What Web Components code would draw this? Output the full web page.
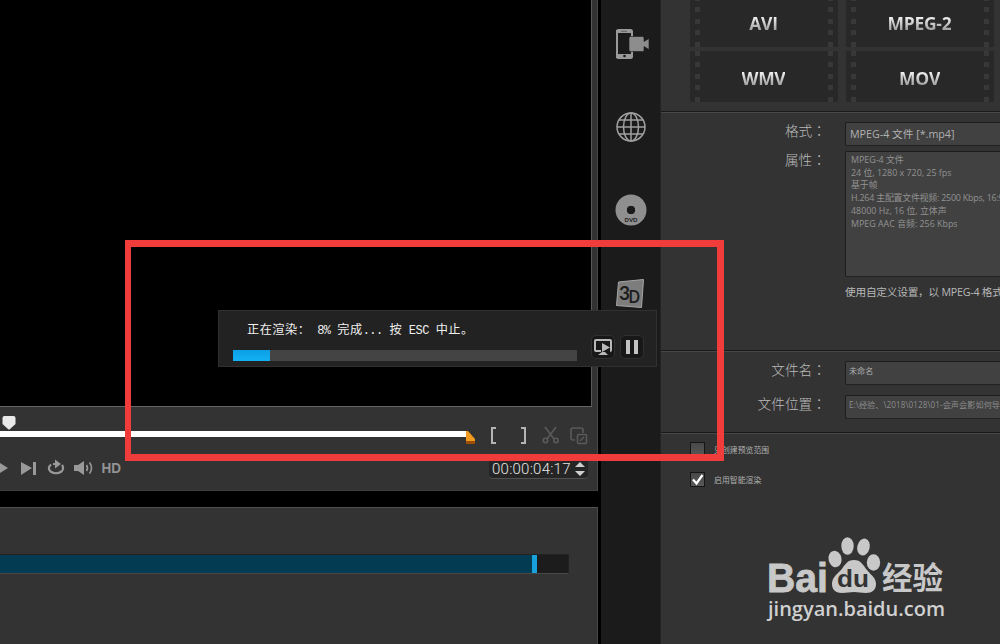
<!DOCTYPE html>
<html>
<head>
<meta charset="utf-8">
<title>Video Studio</title>
<style>
  body {
    margin: 0;
    width: 1000px;
    height: 644px;
    overflow: hidden;
    background: #000;
    color: #a8a8a8;
    font-family: "Open Sans", "Noto Sans CJK SC", sans-serif;
  }
</style>
</head>
<body>
<studio-app></studio-app>

<script>
const define = (name, html) => {
  const template = document.createElement('template');
  template.innerHTML = html;
  customElements.define(name, class extends HTMLElement {
    constructor() {
      super();
      this.attachShadow({mode: 'open'});
      this.shadowRoot.appendChild(template.content.cloneNode(true));
    }
  });
};

define('preview-player', `
  <style>
    :host {
      display: flex;
      flex-direction: column;
      height: 491px;
      box-sizing: border-box;
      background: #333;
      border-right: 1px solid #484848;
      border-bottom: 1px solid #3d3d3d;
    }
    .screen {
      width: 591px;
      height: 406px;
      background: #000;
      border-right: 1px solid #5a5a5a;
      border-bottom: 1px solid #666;
    }
    .seek { height: 44px; }
    .buttons { display: flex; justify-content: space-between; height: 38px; }
    svg { display: block; }
    .time {
      display: flex;
      align-items: center;
      box-sizing: border-box;
      width: 99px;
      height: 20px;
      margin: 8px 9px 0 0;
      padding-left: 3px;
      background: #252525;
      border-bottom: 1px solid #505050;
      border-radius: 4px;
      color: #e4e4e4;
      font: 300 15px/18px Roboto, sans-serif;
      letter-spacing: .25px;
      white-space: nowrap;
    }
    .time span { width: 82px; }
  </style>
  <div class="screen"></div>
  <svg class="seek" width="596" height="44" viewBox="0 407 596 44">
    <path d="M0 431H467V437H0z" fill="#fff"/>
    <path d="M2.500 418q0-2 2-2h9q2 0 2 2v6l-6 5.500h-1l-6-5.500z" fill="#e9e9e9"/>
    <path d="M466 431h2l7 8v4h-9z" fill="#f39a20"/>
    <path d="M466 441h9v3h-9z" fill="#9a4e08"/>
    <g fill="none" stroke="#b4b4b4" stroke-width="2">
      <path d="M496 428h-4v15h4M521 428h4v15h-4"/>
    </g>
    <g fill="none" stroke="#5a5a5a" stroke-width="1.600">
      <path d="M545 427l9 12M556 427l-9 12"/>
      <circle cx="545.500" cy="440.500" r="2.200"/><circle cx="556" cy="440.500" r="2.200"/>
      <path d="M575 440h-2q-2 0-2-2v-8q0-2 2-2h8q2 0 2 2v3"/>
      <rect x="577.500" y="434.500" width="9" height="9" rx="1"/>
      <path d="M580 441l4-4"/>
    </g>
  </svg>
  <div class="buttons">
    <svg width="126" height="38" viewBox="0 451 126 38">
      <g fill="#999">
        <path d="M0 463l8 5-8 5zM21 462l11 6-11 7zM33 462h3v13h-3z"/>
        <path d="M74 465h4l6-4v14l-6-4h-4z"/>
      </g>
      <g fill="none" stroke="#999" stroke-width="2.200">
        <path d="M51 464.500q-4 3.500-.5 7q5.500 3.500 11 0q3-3 .5-6.500M53 464h3"/>
        <path d="M86.500 465q2 3 0 6M89.500 462.500q4 5.500 0 11" stroke-width="1.600"/>
      </g>
      <path d="M55 459.500l6 4.500-6 4.500z" fill="#999"/>
      <text x="101.500" y="473" font-family="Liberation Sans" font-weight="bold" font-size="14" textLength="19.500" lengthAdjust="spacingAndGlyphs" fill="#949494">HD</text>
    </svg>
    <div class="time">
      <span>00:00:04:17</span>
      <svg width="12" height="16"><path d="M1 6l5-5 5 5zM1 10h10l-5 5z" fill="#d0d0d0"/></svg>
    </div>
  </div>`);

define('timeline-strip', `
  <style>
    :host {
      display: block;
      box-sizing: border-box;
      height: 137px;
      padding-top: 46px;
      background: #333;
      border-top: 1px solid #505050;
      border-right: 1px solid #484848;
    }
    .track {
      display: flex;
      width: 568px;
      height: 18px;
      background: #1c1c1c;
      border: solid #222;
      border-width: 1px 1px 1px 0;
      border-bottom-color: #484848;
    }
    .done { width: 532px; background: #023b52; }
    .handle { width: 5px; background: #18a0dc; }
  </style>
  <div class="track"><div class="done"></div><div class="handle"></div></div>`);

define('output-sidebar', `
  <style>
    :host {
      display: grid;
      grid-template-rows: repeat(4, 83px);
      justify-items: center;
      align-items: center;
      align-content: start;
      box-sizing: border-box;
      width: 60px;
      height: 644px;
      padding: 2px 0 0;
      background: #1b1b1b;
      border-right: 1px solid #242424;
    }
    svg { display: block; }
  </style>
  <svg width="38" height="34" viewBox="-1 0 38 34">
    <rect x="4" y="3" width="15" height="28" rx="1.500" fill="none" stroke="#9a9a9a" stroke-width="2"/>
    <path d="M3 3h16v3H3zM3 27h16v4H3z" fill="#9a9a9a"/>
    <path d="M8 4.300h6" stroke="#555" stroke-width=".8"/>
    <circle cx="11.500" cy="29" r="1.300" fill="#1b1b1b"/>
    <path d="M16 11q0-1.500 1.500-1.500h12Q31 9.500 31 11v3.500l5-3v11l-5-3V23q0 1.500-1.500 1.500h-12Q16 24.500 16 23z" fill="#8d8d8d" stroke="#1b1b1b" stroke-width=".6"/>
  </svg>
  <svg width="32" height="32" viewBox="0 0 32 32" fill="none" stroke="#a0a0a0" stroke-width="1.500">
    <circle cx="16" cy="16" r="14"/>
    <ellipse cx="16" cy="16" rx="7.500" ry="14"/>
    <path d="M16 2v28M2 16h28M4 9h24M4 23h24"/>
  </svg>
  <svg width="32" height="32" viewBox="0 0 32 32">
    <circle cx="16" cy="16" r="15.500" fill="#8f8f8f"/>
    <circle cx="16" cy="16" r="4.800" fill="#1b1b1b" stroke="#b0b0b0" stroke-width=".8"/>
    <text x="16" y="28" text-anchor="middle" font-family="Liberation Sans" font-weight="bold" font-size="5.500" textLength="13" lengthAdjust="spacingAndGlyphs" fill="#222">DVD</text>
  </svg>
  <svg width="32" height="32" viewBox="0 0 32 32">
    <path d="M3.500 5l25-2.500-2 28-25-2z" fill="#7d7d7d" stroke="#a5a5a5"/>
    <text x="4" y="23" font-family="Lato" font-weight="bold" font-size="19" fill="#1d1d1d">3</text>
    <text x="13.500" y="26" font-family="Lato" font-weight="bold" font-size="16.500" textLength="11.500" lengthAdjust="spacingAndGlyphs" fill="#1d1d1d">D</text>
  </svg>`);

define('format-tile', `
  <style>
    :host {
      display: flex;
      justify-content: space-between;
      align-items: center;
      box-sizing: border-box;
      height: 51px;
      padding: 0 5px;
      background: #282828;
    }
    .holes {
      width: 5px;
      height: 51px;
      background: repeating-linear-gradient(#383838 0 5px, #282828 5px 11.400px);
    }
    .name {
      margin: 2px 1px 0 0;
      font: 700 17.500px/24px "Open Sans", sans-serif;
      letter-spacing: -.3px;
      background: linear-gradient(#f2f2f2 25%, #999 85%);
      -webkit-background-clip: text;
      background-clip: text;
      color: transparent;
    }
  </style>
  <div class="holes"></div>
  <div class="name"><slot></slot></div>
  <div class="holes"></div>`);

define('form-row', `
  <style>
    :host {
      display: grid;
      grid-template-columns: 165px 1fr;
      column-gap: 19px;
    }
    .label {
      margin-top: -2px;
      text-align: right;
      font: 300 13.700px/20px "Noto Sans CJK SC", sans-serif;
      color: #bababa;
      white-space: nowrap;
    }
    /* the JP face centres the full-width colon */
    .colon { font-family: "Noto Sans CJK JP", sans-serif; }
    .field {
      box-sizing: border-box;
      width: 170px;
      height: var(--field-height, 24px);
      padding: var(--field-padding, 0 4px);
      background: #414141;
      border: 1px solid #1c1c1c;
      border-bottom-color: #222;
      border-radius: 2px;
      color: var(--field-color, #b0b0b0);
      font-size: var(--field-size, 10.700px);
      line-height: var(--field-line, 22px);
      letter-spacing: var(--field-spacing, 0);
      white-space: nowrap;
    }
  </style>
  <div class="label"><slot name="label"></slot><span class="colon" lang="ja">：</span></div>
  <div class="field"><slot></slot></div>`);

define('check-option', `
  <style>
    :host { display: flex; align-items: center; gap: 9px; height: 15px; }
    .box {
      box-sizing: border-box;
      width: 15px;
      height: 15px;
      border: 1px solid #161616;
      background: linear-gradient(#484848, #585858);
    }
    svg { display: none; }
    :host([checked]) svg { display: block; }
    .text { font-size: 7.900px; line-height: 12px; white-space: nowrap; color: #b0b0b0; }
  </style>
  <div class="box"><svg width="13" height="13"><path d="M2 6.500l3.500 4L11.500 2" fill="none" stroke="#fff" stroke-width="2.200"/></svg></div>
  <div class="text"><slot></slot></div>`);

define('share-panel', `
  <style>
    :host {
      display: block;
      width: 339px;
      height: 644px;
      overflow: hidden;
      background: #333;
    }
    section { box-sizing: border-box; border-bottom: 1px solid #1a1a1a; box-shadow: 0 1px #484848; }
    .tiles {
      display: grid;
      grid-template-columns: 148px 148px;
      gap: 4px 8px;
      align-content: end;
      height: 112px;
      padding: 0 0 9px 29px;
    }
    .profile { height: 239px; padding-top: 10px; }
    .profile .details {
      --field-height: 126px;
      --field-padding: 2px 5px;
      --field-size: 8.900px;
      --field-line: 12.700px;
      --field-spacing: 0;
      --field-color: #929292;
      margin-top: 5px;
    }
    .video { letter-spacing: -.2px; }
    .note { margin: 5px 0 0 184px; font-size: 10.700px; line-height: 20px; letter-spacing: -.25px; white-space: nowrap; color: #b8b8b8; }
    .file { height: 82px; padding-top: 10px; --field-size: 8.100px; --field-line: 18px; --field-padding: 0 3px; }
    .file form-row + form-row { margin-top: 10px; --field-color: #8c8c8c; --field-spacing: .1px; }
    .options { padding: 9px 0 0 29px; display: grid; gap: 15px; }
  </style>
  <section class="tiles">
    <format-tile>AVI</format-tile><format-tile>MPEG-2</format-tile>
    <format-tile>WMV</format-tile><format-tile>MOV</format-tile>
  </section>
  <section class="profile">
    <form-row><span slot="label">格式</span>MPEG-4 文件 [*.mp4]</form-row>
    <form-row class="details"><span slot="label">属性</span>
      <div>MPEG-4 文件</div>
      <div>24 位, 1280 x 720, 25 fps</div>
      <div>基于帧</div>
      <div class="video">H.264 主配置文件视频: 2500 Kbps, 16:9</div>
      <div>48000 Hz, 16 位, 立体声</div>
      <div>MPEG AAC 音频: 256 Kbps</div>
    </form-row>
    <div class="note">使用自定义设置，以 MPEG-4 格式</div>
  </section>
  <section class="file">
    <form-row><span slot="label">文件名</span>未命名</form-row>
    <form-row><span slot="label">文件位置</span>E:\\经验、\\2018\\0128\\01-会声会影如何导</form-row>
  </section>
  <div class="options">
    <check-option>只创建预览范围</check-option>
    <check-option checked>启用智能渲染</check-option>
  </div>`);

define('render-dialog', `
  <style>
    :host {
      display: grid;
      grid-template-columns: 344px auto;
      column-gap: 14px;
      box-sizing: border-box;
      width: 439px;
      height: 57px;
      padding: 9px 0 0 14px;
      background: #222;
      border: 1px solid #303030;
    }
    .message {
      padding-left: 14px;
      height: 30px;
      font: 12.200px/18px "Noto Sans CJK SC", sans-serif;
      color: #f0f0f0;
      letter-spacing: .5px;
      white-space: pre;
    }
    .message span { font-family: "Liberation Mono", monospace; font-size: 12px; letter-spacing: -.5px; }
    .bar { height: 11px; background: #444; }
    .value { width: 37px; height: 11px; background: linear-gradient(#0ba0e4, #14b0f4); }
    .actions { display: flex; gap: 5px; padding-top: 15px; }
    .actions svg { display: block; background: #181818; border: 1px solid #303030; border-radius: 5px; }
  </style>
  <div>
    <div class="message">正在渲染：<span> 8% </span>完成<span>... </span>按<span> ESC </span>中止。</div>
    <div class="bar"><div class="value"></div></div>
  </div>
  <div class="actions">
    <svg width="22" height="22" viewBox="0 0 22 22">
      <path d="M9 15H4q-1 0-1-1V5q0-1 1-1h14q1 0 1 1v9q0 1-1 1" fill="none" stroke="#b8b8b8" stroke-width="2"/>
      <path d="M10 7l8 4.500-8 4.500zM10 16h3l3 3H6z" fill="#b8b8b8"/>
    </svg>
    <svg width="22" height="22" viewBox="0 0 22 22"><path d="M5 4h4v14H5zM13 4h4v14h-4z" fill="#c4c4c4"/></svg>
  </div>`);

define('site-watermark', `
  <style>
    :host { display: block; width: 190px; height: 94px; }
    svg { display: block; }
  </style>
  <svg width="190" height="94" viewBox="762 532 190 94" fill="#c8c8c8">
    <text x="767" y="592" font-family="Liberation Sans" font-weight="bold" font-size="40" textLength="61" lengthAdjust="spacingAndGlyphs" stroke="#c8c8c8" stroke-width=".8">Bai</text>
    <ellipse cx="835" cy="559" rx="6.500" ry="8.300" transform="rotate(-12 835 559)"/>
    <ellipse cx="847.500" cy="546" rx="6.200" ry="8.700"/>
    <ellipse cx="863.500" cy="547" rx="6.200" ry="8.600" transform="rotate(14 863.500 547)"/>
    <ellipse cx="873.500" cy="562.500" rx="6.700" ry="8.300"/>
    <path d="M854 560c7 0 9 5 13 10c5 6 9 8 9 14c0 6-4 9-10 9c-5 0-8-1-12-1s-7 1-12 1c-6 0-10-3-10-9c0-6 4-9 9-14c4-5 6-10 13-10z"/>
    <text x="837" y="587" font-family="Liberation Sans" font-weight="bold" font-size="23" textLength="32" lengthAdjust="spacingAndGlyphs" fill="#333">du</text>
    <text x="882" y="589" font-family="Noto Sans CJK SC" font-weight="bold" font-size="30.500" textLength="61">经验</text>
    <text x="768" y="615.500" font-family="Open Sans" font-weight="600" font-size="20" textLength="177" fill="#d0d0d0">jingyan.baidu.com</text>
  </svg>`);

define('studio-app', `
  <style>
    :host { display: block; width: 1000px; height: 644px; overflow: hidden; position: relative; }
    .layout { display: grid; grid-template-columns: 601px 60px 339px; }
    .main { display: grid; gap: 16px; align-content: start; width: 598px; }
    /* floating layers over the workspace */
    render-dialog { position: absolute; left: 218px; top: 310px; }
    site-watermark { position: absolute; left: 762px; top: 532px; }
    .highlight {
      position: absolute;
      left: 125px;
      top: 240px;
      box-sizing: border-box;
      width: 599px;
      height: 221px;
      border: solid #f13c3c;
      border-width: 7px 7px 7px 6px;
    }
  </style>
  <div class="layout">
    <div class="main">
      <preview-player></preview-player>
      <timeline-strip></timeline-strip>
    </div>
    <output-sidebar></output-sidebar>
    <share-panel></share-panel>
  </div>
  <render-dialog></render-dialog>
  <site-watermark></site-watermark>
  <div class="highlight"></div>`);
</script>
</body>
</html>
